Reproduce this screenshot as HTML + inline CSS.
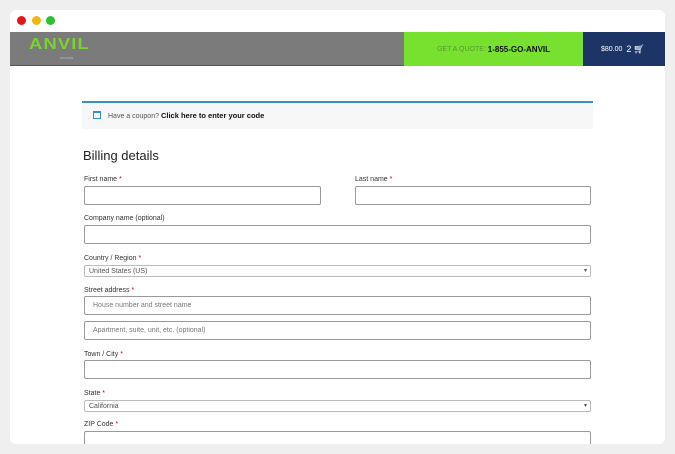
<!DOCTYPE html>
<html><head><style>
*{margin:0;padding:0;box-sizing:border-box}
body{width:675px;height:454px;background:#efefef;font-family:"Liberation Sans",sans-serif;position:relative;overflow:hidden}
.win{position:absolute;left:10px;top:10px;width:655px;height:434px;background:#fff;border-radius:6px;overflow:hidden}
.dot{position:absolute;top:16px;width:9px;height:9px;border-radius:50%}
.a{position:absolute}
.lbl{position:absolute;left:84px;font-size:7px;color:#333}
.lbl b{color:#c00;font-weight:normal}
.in{position:absolute;border:1px solid #999;border-radius:2px;background:#fff;font-size:7px;color:#777;padding-left:8px;display:flex;align-items:center}
.sel{position:absolute;left:84px;width:507px;height:12px;border:1px solid #bbb;border-radius:2px;font-size:7px;color:#555;padding-left:4px;line-height:11px}
.sel:after{content:"▾";position:absolute;right:3px;top:0;font-size:6px}
</style></head><body>
<div class="win"></div>
<div class="dot" style="left:17px;background:#e5161a"></div>
<div class="dot" style="left:32px;background:#f4b315"></div>
<div class="dot" style="left:46px;background:#2bc12f"></div>
<div class="a" style="left:10px;top:32px;width:394px;height:34px;background:#7b7b7b;border-bottom:1px solid #555"></div>
<div class="a" style="left:29px;top:36px;font:bold 16px 'Liberation Sans',sans-serif;color:#7ad32c;letter-spacing:1px;transform:scaleX(1.15);transform-origin:left">ANVIL</div>
<div class="a" style="left:60px;top:56px;font-size:3px;color:#ccc">FACTION</div>
<div class="a" style="left:404px;top:32px;width:179px;height:34px;background:#78e02f;font-size:7px;color:#5a9a2a;display:flex;align-items:center;justify-content:center">GET A QUOTE:&nbsp;<b style="color:#111;font-size:8px">1-855-GO-ANVIL</b></div>
<div class="a" style="left:583px;top:32px;width:82px;height:34px;background:#1c3566;color:#fff;font-size:7px;display:flex;align-items:center;padding-left:18px">$80.00 &nbsp;<span style="font-size:9px">2</span>&nbsp;<span style="font-size:9px">🛒︎</span></div>
<div class="a" style="left:82px;top:101px;width:511px;height:28px;background:#f7f7f7;border-top:2px solid #3b8fc6"></div>
<div class="a" style="left:93px;top:111px;width:8px;height:8px;border:1px solid #3b8fc6;border-top-width:2px"></div>
<div class="a" style="left:108px;top:111px;font-size:7px;color:#555">Have a coupon? <b style="color:#111;font-size:7.5px">Click here to enter your code</b></div>
<div class="a" style="left:83px;top:148px;font-size:13px;color:#222">Billing details</div>
<div class="lbl" style="top:176px">First name <b>*</b></div>
<div class="lbl" style="top:176px;left:355px">Last name <b>*</b></div>
<div class="in" style="left:84px;top:186px;width:237px;height:19px"></div>
<div class="in" style="left:355px;top:186px;width:236px;height:19px"></div>
<div class="lbl" style="top:215px">Company name (optional)</div>
<div class="in" style="left:84px;top:225px;width:507px;height:19px"></div>
<div class="lbl" style="top:255px">Country / Region <b>*</b></div>
<div class="sel" style="top:265px">United States (US)</div>
<div class="lbl" style="top:287px">Street address <b>*</b></div>
<div class="in" style="left:84px;top:296px;width:507px;height:19px">House number and street name</div>
<div class="in" style="left:84px;top:321px;width:507px;height:19px">Apartment, suite, unit, etc. (optional)</div>
<div class="lbl" style="top:351px">Town / City <b>*</b></div>
<div class="in" style="left:84px;top:360px;width:507px;height:19px"></div>
<div class="lbl" style="top:390px">State <b>*</b></div>
<div class="sel" style="top:400px">California</div>
<div class="lbl" style="top:421px">ZIP Code <b>*</b></div>
<div class="in" style="left:84px;top:431px;width:507px;height:19px"></div>
<div class="a" style="left:0;top:444px;width:675px;height:10px;background:#efefef"></div>
</body></html>
